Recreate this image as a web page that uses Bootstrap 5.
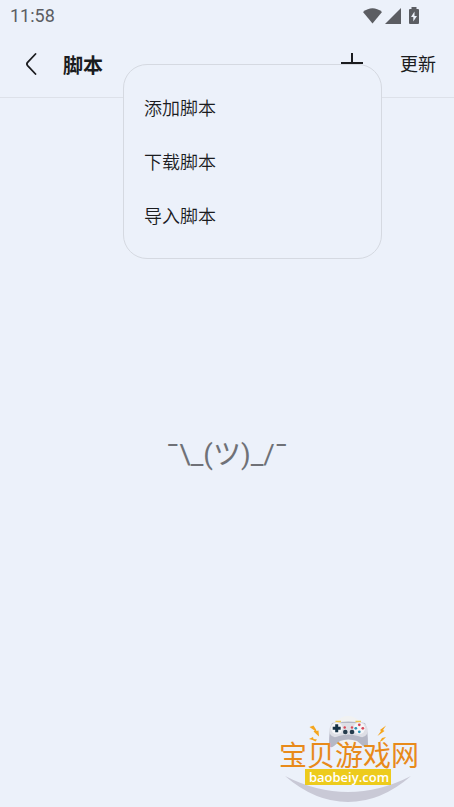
<!DOCTYPE html>
<html lang="zh-CN">
<head>
<meta charset="utf-8">
<meta name="viewport" content="width=device-width, initial-scale=1">
<title>脚本</title>
<link href="https://cdn.jsdelivr.net/npm/bootstrap@5.3.0/dist/css/bootstrap.min.css" rel="stylesheet">
<style>
body{background:#ecf1fa;color:#1b1c1f;font-family:Roboto,"Noto Sans CJK SC",sans-serif;font-size:18px;line-height:24px}
.status-bar{height:32px;padding:0 34px 0 10px;color:#5b5d62}
.status-icons{gap:3px;padding-bottom:1px}
.top-bar{height:66px;padding:0 18px 0 19px;border-bottom:1px solid #dde1e9}
.bar-btn{color:#1b1c1f;font-size:18px;line-height:24px;padding:1px 0 0}
.page-title{font-size:20px;line-height:24px;margin-left:20px;padding-top:2px}
.add-btn{margin-right:37px}
.script-menu{display:block;position:absolute;top:32px;right:72px;width:259px;padding:17px 0 14px;border:1px solid #d5d9e1;border-radius:24px;background:#ecf1fa}
.script-menu .dropdown-item{height:54px;padding:0 20px;font-size:18px;font-weight:350;color:#1b1c1f}
.shrug{color:#6f7177;font-size:28px;line-height:36px;padding-top:4px}
.site-mark{position:absolute;right:32px;bottom:2px;width:142px}
.site-mark svg{display:block}
</style>
<script src="https://cdn.jsdelivr.net/npm/bootstrap@5.3.0/dist/js/bootstrap.bundle.min.js"></script>
</head>
<body class="d-flex flex-column min-vh-100 position-relative">
<div class="status-bar d-flex align-items-center justify-content-between">
  <span>11:58</span>
  <div class="status-icons d-flex align-items-center">
    <svg width="19" height="16" viewBox="0 0 19 16" fill="#5b5d62" aria-hidden="true"><path d="M9.500 15.500L0 4Q9.500-3.500 19 4Z"/></svg>
    <svg width="16" height="16" viewBox="0 0 16 16" fill="#5b5d62" aria-hidden="true"><path d="M0 16L16 0V16Z"/></svg>
    <svg class="ms-1" width="12" height="18" viewBox="0 0 12 18" aria-hidden="true"><path fill="#5b5d62" d="M3.500 0h5v2H10a1 1 0 0 1 1 1v13a1 1 0 0 1-1 1H2a1 1 0 0 1-1-1V3a1 1 0 0 1 1-1h1.500z"/><path fill="#ecf1fa" d="M6.500 4.500L3 10h2.300v4.500L9 9H6.500z"/></svg>
  </div>
</div>
<header class="top-bar d-flex align-items-center position-relative">
  <button type="button" class="bar-btn btn border-0 d-flex" aria-label="返回">
    <svg width="24" height="24" viewBox="0 0 24 24" fill="none" stroke="#1b1c1f" stroke-width="1.800" stroke-linecap="round" stroke-linejoin="round"><path d="M16.500 1L8.600 9.400Q7.200 11 8.600 12.600L16.500 21"/></svg>
  </button>
  <h1 class="page-title fw-bold mb-0">脚本</h1>
  <button type="button" class="add-btn bar-btn btn border-0 d-flex ms-auto" aria-label="添加" aria-expanded="true">
    <svg width="22" height="24" viewBox="0 0 22 24" stroke="#1b1c1f" stroke-width="2"><path d="M0 10H22M11 0V21"/></svg>
  </button>
  <button type="button" class="bar-btn btn border-0">更新</button>
  <div class="script-menu">
    <button type="button" class="dropdown-item">添加脚本</button>
    <button type="button" class="dropdown-item">下载脚本</button>
    <button type="button" class="dropdown-item">导入脚本</button>
  </div>
</header>
<main class="flex-grow-1 d-flex align-items-center justify-content-center">
  <div class="shrug">¯\_(ツ)_/¯</div>
</main>
<div class="site-mark">
  <svg viewBox="0 0 142 90" width="142" height="90" role="img" aria-label="宝贝游戏网 baobeiy.com">
    <circle cx="68" cy="17" r="16" fill="#f1f2f2"/>
    <path d="M5 61Q68 93 131 61Q101 87 68 87Q35 87 5 61Z" fill="#c9c9d6"/>
    <path d="M52 8Q68 5 85 8Q88 14 88 30Q87 34 83 31L77 26Q68 23 60 26L54 31Q50 34 49 30Q49 14 52 8Z" fill="#b5b7c5"/>
    <path d="M52 9Q57 5 62 8H75Q80 5 85 9Q89 13 87 19Q84 24 78 21Q68 18 59 21Q53 24 50 19Q48 13 52 9Z" fill="#dedfe6"/>
    <path d="M55.500 6.500h5.500M75.500 6.500h5.500" stroke="#efc64a" stroke-width="1.500"/>
    <circle cx="56.700" cy="13.300" r="5.800" fill="#f4f5f8"/><circle cx="79.300" cy="13.300" r="5.800" fill="#f4f5f8"/>
    <path d="M56.700 9.300v8M52.700 13.300h8" stroke="#173346" stroke-width="3"/>
    <g fill="#d94858"><circle cx="79.300" cy="9.800" r="1.400"/><circle cx="82.800" cy="13.300" r="1.400"/><circle cx="64.700" cy="12.500" r="1.200"/><circle cx="72" cy="12.500" r="1.200"/></g>
    <g fill="#2b91b5"><circle cx="75.800" cy="13.300" r="1.400"/><circle cx="79.300" cy="16.800" r="1.400"/></g>
    <g fill="#253b4c"><circle cx="65.300" cy="17" r="2.300"/><circle cx="72" cy="17" r="2.300"/></g>
    <path d="M29.500 12l4-1.500 2.500 4 .5 1.500 2-.5.500 6-5.500-5 1.300-.7zM29 24l4-2 .5 2 3.500.5-1.500 2-3-1.500zM106 10.500l-6 4.500 1 1-3.500 5 7-5-1.500-1zM106 22l-4 1-2.500 4 3-1.500z" fill="#f5a61e"/>
    <text x="-1" y="51" font-family="Noto Sans CJK SC,sans-serif" font-size="28" fill="#e88a1a">宝贝游戏网</text>
    <rect x="25" y="54" width="86" height="16" fill="#edcb1c"/>
    <text x="69" y="67" text-anchor="middle" font-family="Open Sans,sans-serif" font-size="13" font-weight="600" fill="#fff">baobeiy.com</text>
  </svg>
</div>
</body>
</html>
